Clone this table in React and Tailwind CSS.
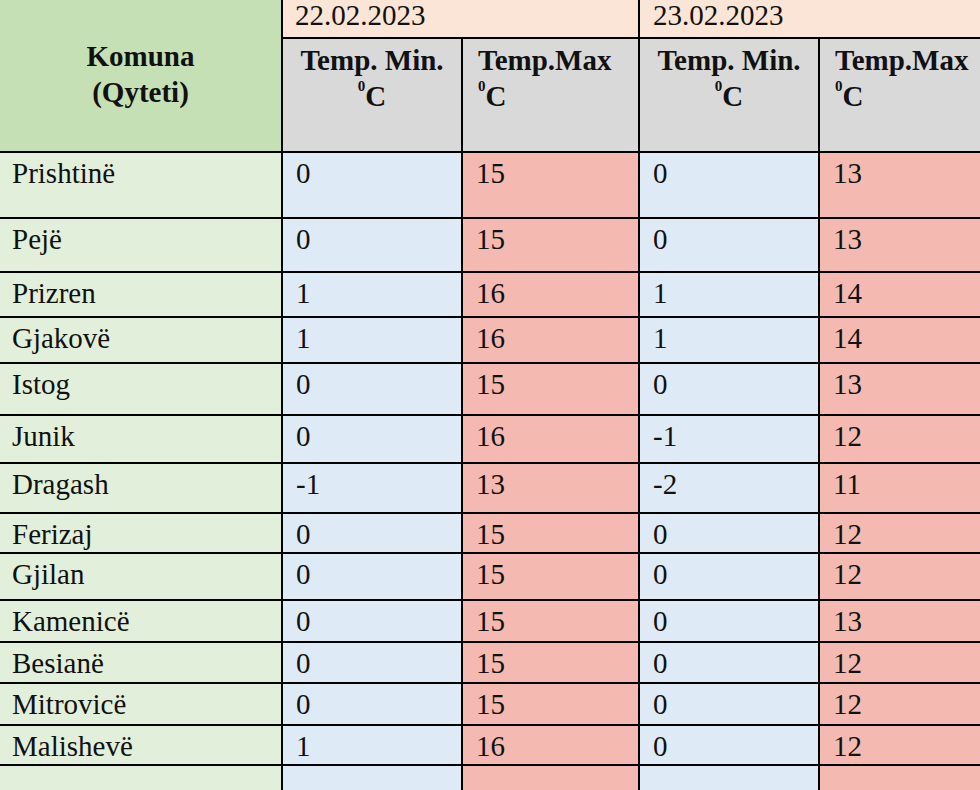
import React from "react";

const rows = [
  { name: "Prishtinë", h: "h-[64px]", v: ["0", "15", "0", "13"] },
  { name: "Pejë", h: "h-[52px]", v: ["0", "15", "0", "13"] },
  { name: "Prizren", h: "h-[43px]", v: ["1", "16", "1", "14"] },
  { name: "Gjakovë", h: "h-[44px]", v: ["1", "16", "1", "14"] },
  { name: "Istog", h: "h-[50px]", v: ["0", "15", "0", "13"] },
  { name: "Junik", h: "h-[46px]", v: ["0", "16", "-1", "12"] },
  { name: "Dragash", h: "h-[48px]", v: ["-1", "13", "-2", "11"] },
  { name: "Ferizaj", h: "h-[38px]", v: ["0", "15", "0", "12"] },
  { name: "Gjilan", h: "h-[45px]", v: ["0", "15", "0", "12"] },
  { name: "Kamenicë", h: "h-[40px]", v: ["0", "15", "0", "13"] },
  { name: "Besianë", h: "h-[39px]", v: ["0", "15", "0", "12"] },
  { name: "Mitrovicë", h: "h-[40px]", v: ["0", "15", "0", "12"] },
  { name: "Malishevë", h: "h-[38px]", v: ["1", "16", "0", "12"] },
  { name: "", h: "h-[40px]", v: ["", "", "", ""] },
];

const cellBg = ["bg-[#deebf7]", "bg-[#f4bab2]", "bg-[#deebf7]", "bg-[#f4bab2]"];

const Deg = () => (
  <span>
    <sup className="text-[15px] align-[8px]">0</sup>C
  </span>
);

const App = () => {
  return (
    <div
      className="h-[790px] w-[980px] overflow-hidden bg-white text-[29px] text-[#111111]"
      style={{ fontFamily: '"Liberation Serif", "Times New Roman", serif' }}
    >
      <div className="grid grid-cols-[281px_178px_175px_178px_160px] gap-[2px] bg-black">
        {/* header */}
        <div className="row-span-2 bg-[#c5e0b4] flex flex-col items-center justify-center pb-[4px] font-bold leading-[36px]">
          <span>Komuna</span>
          <span>(Qyteti)</span>
        </div>
        <div className="col-span-2 h-[37px] bg-[#fbe5d6] pl-[12px] leading-[30px]">22.02.2023</div>
        <div className="col-span-2 h-[37px] bg-[#fbe5d6] pl-[13px] leading-[30px]">23.02.2023</div>

        <div className="h-[112px] bg-[#d9d9d9] pt-[3px] text-center font-bold leading-[36px]">
          Temp. Min.
          <br />
          <Deg />
        </div>
        <div className="h-[112px] bg-[#d9d9d9] pt-[3px] pl-[15px] font-bold leading-[36px]">
          Temp.Max
          <br />
          <Deg />
        </div>
        <div className="h-[112px] bg-[#d9d9d9] pt-[3px] text-center font-bold leading-[36px]">
          Temp. Min.
          <br />
          <Deg />
        </div>
        <div className="h-[112px] bg-[#d9d9d9] pt-[3px] pl-[15px] font-bold leading-[36px]">
          Temp.Max
          <br />
          <Deg />
        </div>

        {/* data rows */}
        {rows.map((r, i) => (
          <React.Fragment key={i}>
            <div className={`${r.h} bg-[#e2efda] pl-[12px] leading-[40px]`}>{r.name}</div>
            {r.v.map((val, j) => (
              <div key={j} className={`${r.h} ${cellBg[j]} pl-[13px] leading-[40px]`}>
                {val}
              </div>
            ))}
          </React.Fragment>
        ))}
      </div>
    </div>
  );
};

export default App;
